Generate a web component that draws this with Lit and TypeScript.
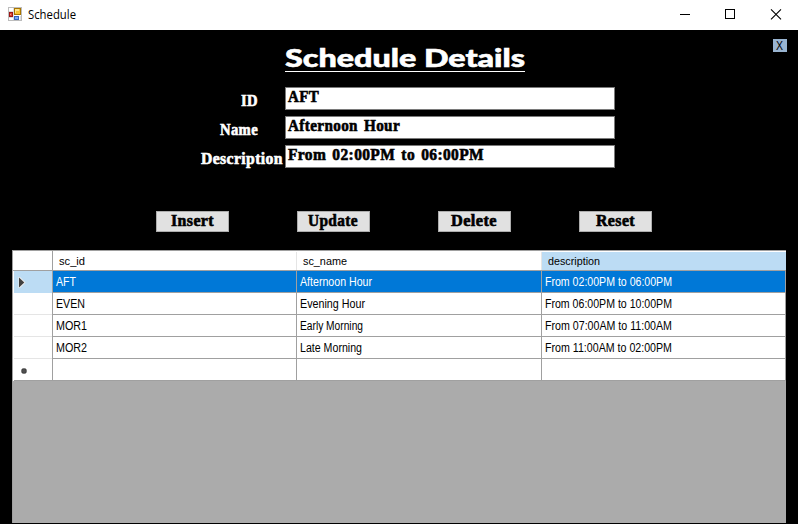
import { LitElement, html, svg, css } from "lit";
import { customElement, state } from "lit/decorators.js";

// A single line of text set to an exact advance width.
const line = (text: string, width: number, height: number, baseline: number, cls: string) => html`
  <svg class="line ${cls}" width=${width} height=${height}>
    ${svg`<text x="0" y=${baseline} textLength=${width} lengthAdjust="spacingAndGlyphs">${text}</text>`}
  </svg>`;

type Label = [text: string, width: number];

@customElement("app-root")
export class AppRoot extends LitElement {
  @state() private selected = 0;

  private fields: { label: Label; gap: number; value: Label }[] = [
    { label: ["ID", 17], gap: 27, value: ["AFT", 31] },
    { label: ["Name", 38], gap: 27, value: ["Afternoon Hour", 112] },
    { label: ["Description", 82], gap: 2, value: ["From 02:00PM to 06:00PM", 196] },
  ];

  private actions: Label[] = [["Insert", 43], ["Update", 50], ["Delete", 46], ["Reset", 39]];

  private columns: Label[] = [["sc_id", 26], ["sc_name", 44], ["description", 52]];

  private rows: Label[][] = [
    [["AFT", 20], ["Afternoon Hour", 72], ["From 02:00PM to 06:00PM", 127]],
    [["EVEN", 29], ["Evening Hour", 65], ["From 06:00PM to 10:00PM", 127]],
    [["MOR1", 31], ["Early Morning", 63], ["From 07:00AM to 11:00AM", 127]],
    [["MOR2", 31], ["Late Morning", 62], ["From 11:00AM to 02:00PM", 127]],
  ];

  static styles = css`
    :host { display: flex; flex-direction: column; width: 798px; height: 524px; background: #000; overflow: hidden; font-family: "Liberation Sans", Arial, sans-serif; }
    * { box-sizing: border-box; }
    svg { display: block; flex: none; overflow: visible; }
    .titlebar { height: 30px; background: #fff; display: flex; align-items: flex-start; padding: 7px 16px 0 8px; }
    .caption { font-family: "Open Sans", "Noto Sans", sans-serif; font-size: 12px; margin-left: 6px; margin-top: -7px; }
    .controls { display: flex; gap: 34px; margin: 2px 0 0 auto; }
    .heading { display: flex; height: 57px; padding: 12px 11px 0 285px; justify-content: space-between; flex: none; }
    .title { border-bottom: 1px solid #fff; width: 240px; height: 30px; }
    .display { font: 900 25.5px Lato, sans-serif; fill: #fff; stroke: #fff; stroke-width: .6px; }
    .exit { margin-top: -3px; width: 14px; height: 13px; background: #99b4d1; padding-left: 3px; }
    .small { font-size: 11px; fill: #000; }
    .body { font-size: 12px; fill: #000; }
    .serif { font: bold 16px "Liberation Serif", serif; fill: #000; stroke: #000; stroke-width: .6px; word-spacing: 2px; letter-spacing: .4px; }
    .serif.light { fill: #fff; stroke: #fff; }
    .form { display: flex; flex-direction: column; gap: 6px; height: 124px; flex: none; }
    .field { display: flex; height: 23px; }
    .label { width: 285px; display: flex; justify-content: flex-end; flex: none; }
    .box { width: 330px; background: #fff; border: 1px solid #7a7a7a; padding-left: 2px; }
    .actions { display: flex; gap: 68px; padding-left: 156px; height: 39px; align-items: flex-start; flex: none; }
    .button { width: 73px; height: 21px; background: #e1e1e1; border: 1px solid #adadad; display: flex; justify-content: center; padding-right: 1px; }
    .grid { margin: 0 12px; width: 774px; height: 273px; background: #ababab; border-left: 1px solid #a0a0a0; border-top: 1px solid #a0a0a0; flex: none; }
    .row { display: grid; grid-template-columns: 40px 244px 245px 244px; height: 22px; background: #fff; }
    .head { height: 20px; border-bottom: 1px solid #a0a0a0; padding-top: 1px; }
    .head > div { border-right: 1px solid #e5e5e5; padding-left: 6px; }
    .head > .corner { border-color: #a0a0a0; margin-top: -1px; }
    .head > .hot { background: #bcdcf4; border: 0; }
    .cell { border-right: 1px solid #a0a0a0; border-bottom: 1px solid #a0a0a0; padding-left: 3px; }
    .marker { border-right: 1px solid #a0a0a0; padding-left: 1px; }
    .marker > div { height: 22px; border-bottom: 1px solid #e5e5e5; }
    .current .cell { background: #0078d7; }
    .current .body { fill: #fff; }
    .current .marker > div { background: #bcdcf4; border: 0; }
    .fresh .marker > div { border-color: #a0a0a0; }
  `;

  private marker(kind: "current" | "fresh" | "") {
    if (kind === "current")
      return html`<svg width="20" height="21"><path d="M4.5 6v11h1.5l5.5-5.5L6 6z" fill="#eee"/><path d="M5 6.5v10l5.3-5z" fill="#404040"/></svg>`;
    if (kind === "fresh")
      return html`<svg width="20" height="21"><path d="M8 9h4v1h1v4h-1v1H8v-1H7v-4h1z" fill="#aaa"/><path d="M8 10h4v4H8z" fill="#404040"/><path d="M9.5 9h1v6h-1zM7 11.5h6v1H7z" fill="#555"/></svg>`;
    return "";
  }

  private row(cells: Label[], kind: "current" | "fresh" | "", index = -1) {
    return html`<div class="row ${kind}" @click=${() => { if (index >= 0) this.selected = index; }}>
      <div class="marker"><div>${this.marker(kind)}</div></div>
      ${cells.map(([t, w]) => html`<div class="cell">${t ? line(t, w, 21, 15, "body") : ""}</div>`)}
    </div>`;
  }

  render() {
    return html`
      <div class="titlebar">
        <svg width="14" height="14" shape-rendering="crispEdges">
          <path d="M0 0h14v14H0z" fill="#bcbcbc"/><path d="M1 1h12v12H1z" fill="#fff"/>
          <path d="M5.5 1v12M1 4.5h4M1 10.5h4M12.5 9v4" stroke="#ddd"/>
          <path d="M6 1h7v7H6z" fill="#a87500"/><path d="M7 2h5v5H7z" fill="#f7c331"/><path d="M7 2h4v2H8v2H7z" fill="#ffe48b"/>
          <path d="M1 5h4v5H1z" fill="#9c1717"/><path d="M2 6h2v3H2z" fill="#d94735"/><path d="M2 7h1v1H2z" fill="#f39c83"/>
          <path d="M6 9h5v4H6z" fill="#3465bd"/><path d="M7 10h3v2H7z" fill="#77a7f5"/>
        </svg>
        <div class="caption">${line("Schedule", 48, 20, 19, "")}</div>
        <div class="controls">
          <svg width="11" height="11" shape-rendering="crispEdges"><path d="M0 5.5h10" stroke="#000"/></svg>
          <svg width="11" height="11" shape-rendering="crispEdges"><path d="M.5.5h9v9h-9z" fill="none" stroke="#000"/></svg>
          <svg width="12" height="11"><path d="M1 .3l10 10M11 .3l-10 10" stroke="#000" stroke-width="1.1"/></svg>
        </div>
      </div>
      <div class="heading">
        <div class="title">${line("Schedule Details", 240, 29, 25, "display")}</div>
        <div class="exit">${line("X", 7, 13, 11, "body")}</div>
      </div>
      <div class="form">
        ${this.fields.map(f => html`<div class="field">
          <div class="label" style="padding-right:${f.gap}px">${line(f.label[0], f.label[1], 23, 19, "serif light")}</div>
          <div class="box">${line(f.value[0], f.value[1], 20, 14, "serif")}</div>
        </div>`)}
      </div>
      <div class="actions">
        ${this.actions.map(([t, w]) => html`<div class="button">${line(t, w, 19, 14, "serif")}</div>`)}
      </div>
      <div class="grid">
        <div class="row head">
          <div class="corner"></div>
          ${this.columns.map(([t, w], i) => html`<div class=${i === 2 ? "hot" : ""}>${line(t, w, 18, 13, "small")}</div>`)}
        </div>
        ${this.rows.map((r, i) => this.row(r, i === this.selected ? "current" : "", i))}
        ${this.row([["", 0], ["", 0], ["", 0]], "fresh")}
      </div>`;
  }
}
